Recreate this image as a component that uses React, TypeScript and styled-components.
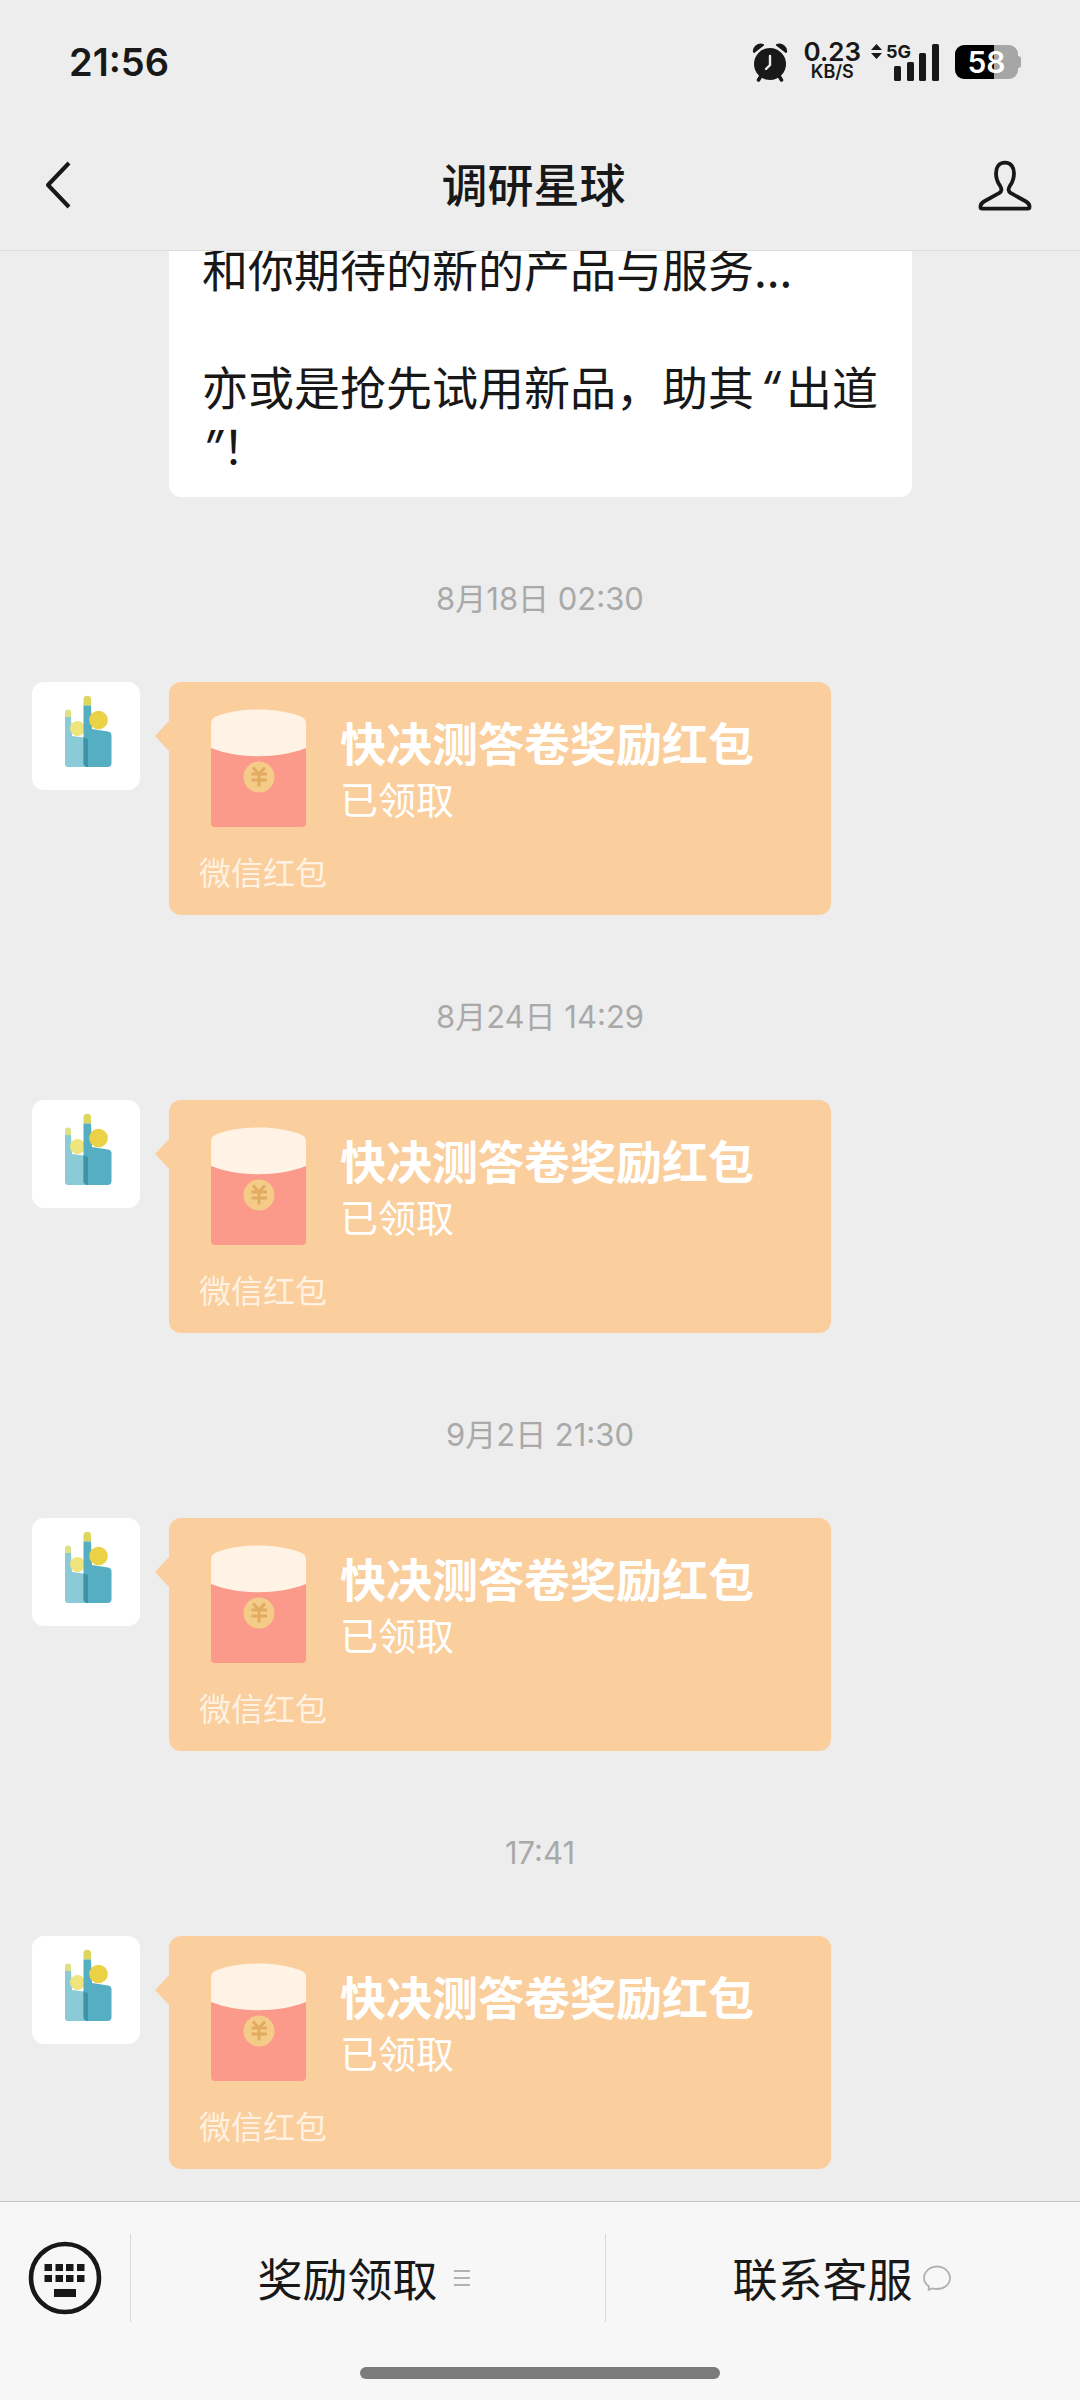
import React from "react";
import styled, { createGlobalStyle, css } from "styled-components";

const ink = "#181818";
const cjk = '"Noto Sans CJK SC", "Noto Sans", sans-serif';
const latin = 'Inter, "Noto Sans CJK SC", sans-serif';

const GlobalStyle = createGlobalStyle`
  *, *::before, *::after { box-sizing: border-box; }
  body { margin: 0; background: #ededed; color: ${ink}; font-family: ${cjk}; }
  button { margin: 0; padding: 0; border: 0; background: none; color: inherit; font: inherit; }
  svg { display: block; flex: none; }
`;

const Page = styled.div`
  display: flex;
  flex-direction: column;
  height: 100vh;
  background: #ededed;
`;

const StatusBar = styled.div`
  display: flex;
  align-items: center;
  justify-content: space-between;
  flex: none;
  height: 124px;
  padding: 0 59px 0 69px;
  font-family: ${latin};
`;

const Clock = styled.time`
  font-size: 38px;
  font-weight: 600;
  line-height: 48px;
`;

const StatusIcons = styled.div`
  display: flex;
  align-items: center;
  gap: 16px;
`;

const NetSpeed = styled.div`
  display: flex;
  flex-direction: column;
  align-items: center;
  margin-right: -6px;
  font-weight: 600;
`;

const SpeedValue = styled.span`
  font-size: 26px;
  line-height: 20px;
`;

const SpeedUnit = styled.span`
  font-size: 18px;
  line-height: 20px;
`;

const Signal = styled.div`
  display: flex;
  align-items: flex-end;
`;

const Network = styled.span`
  align-self: flex-start;
  margin: 0 -17px 0 4px;
  font-size: 18px;
  font-weight: 700;
  line-height: 16px;
`;

const Battery = styled.div`
  display: flex;
  align-items: center;
`;

const BatteryBody = styled.div<{ $level: number }>`
  width: 63px;
  height: 34px;
  border-radius: 9px;
  background: linear-gradient(90deg, #000 ${(p) => p.$level}%, #a6a6a6 ${(p) => p.$level}%);
  color: #fff;
  font-size: 30px;
  font-weight: 600;
  line-height: 34px;
  text-align: center;
`;

const BatteryNub = styled.div`
  width: 3px;
  height: 12px;
  border-radius: 0 4px 4px 0;
  background: #a6a6a6;
`;

const Header = styled.header`
  display: flex;
  align-items: center;
  justify-content: space-between;
  flex: none;
  height: 127px;
  padding: 0 47px 4px 42px;
  border-bottom: 1px solid #dcdcdc;
`;

const Title = styled.h1`
  margin: 0;
  padding-bottom: 6px;
  font-size: 46px;
  font-weight: 500;
  line-height: 64px;
`;

const IconButton = styled.button`
  display: flex;
  align-items: center;
  justify-content: center;
`;

const BackButton = styled(IconButton)`
  justify-content: flex-start;
  width: 48px;
`;

const Chat = styled.main`
  display: flex;
  flex: 1;
  flex-direction: column;
  justify-content: flex-end;
  min-height: 0;
  overflow: hidden;
  padding: 0 32px;
`;

const Bubble = styled.div`
  flex: none;
  margin: 0 136px 78px 137px;
  padding: 23px 33px;
  border-radius: 12px;
  background: #fff;
  font-size: 46px;
  line-height: 59px;
`;

const Line = styled.p`
  min-height: 59px;
  margin: 0;
  white-space: nowrap;
`;

const Quote = styled.span<{ $closing?: boolean }>`
  display: inline-block;
  width: ${(p) => (p.$closing ? 20 : 32)}px;
  font-family: Inter, sans-serif;
  font-style: italic;
  line-height: 1;
  text-align: ${(p) => (p.$closing ? "left" : "center")};
`;

const Stamp = styled.time`
  flex: none;
  margin-bottom: 60px;
  color: #a9a9a9;
  font-family: ${latin};
  font-size: 31px;
  line-height: 47px;
  text-align: center;
`;

const MessageRow = styled.div<{ $last: boolean }>`
  display: flex;
  align-items: flex-start;
  flex: none;
  gap: 29px;
  margin-bottom: ${(p) => (p.$last ? 32 : 78)}px;
`;

const AvatarBox = styled.div`
  flex: none;
  width: 108px;
  height: 108px;
  border-radius: 12px;
  background: #fff;
`;

const Packet = styled.button`
  position: relative;
  display: flex;
  flex-direction: column;
  justify-content: space-between;
  width: 662px;
  height: 233px;
  padding: 27px 30px 24px;
  border-radius: 12px;
  background: #fbce9d;
  color: #fff;
  text-align: left;

  &::before {
    content: "";
    position: absolute;
    top: 39px;
    left: -14px;
    border: 15px solid transparent;
    border-left-width: 0;
    border-right: 14px solid #fbce9d;
  }
`;

const PacketBody = styled.span`
  display: flex;
  align-items: flex-start;
  gap: 34px;
  padding-left: 12px;
`;

const PacketText = styled.span`
  display: flex;
  flex-direction: column;
  padding-top: 4px;
`;

const PacketTitle = styled.strong`
  font-size: 46px;
  font-weight: 700;
  line-height: 56px;
`;

const PacketState = styled.span`
  font-size: 38px;
  line-height: 58px;
`;

const PacketSource = styled.span`
  color: #fff2e2;
  font-size: 32px;
  line-height: 40px;
`;

const Footer = styled.footer`
  flex: none;
  border-top: 1px solid #c6c6c6;
  background: #f7f7f7;
`;

const Menu = styled.nav`
  display: flex;
  align-items: center;
  height: 152px;
`;

const footerRule = css`
  border-left: 1px solid #dadada;
`;

const KeyboardButton = styled(IconButton)`
  width: 130px;
`;

const MenuButton = styled.button`
  display: flex;
  flex: 1;
  align-items: center;
  justify-content: center;
  gap: 10px;
  height: 88px;
  padding-right: 3px;
  ${footerRule}
  font-size: 45px;
  line-height: 64px;
`;

const HomeBar = styled.div`
  width: 360px;
  height: 12px;
  margin: 13px auto 21px;
  border-radius: 6px;
  background: #7b7b7b;
`;

const AlarmIcon = () => (
  <svg width="36" height="39" viewBox="0 0 36 39" aria-hidden="true">
    <path d="M2 9C1 5 6 0 11 2Z" fill={ink} stroke={ink} strokeWidth="2" strokeLinejoin="round" />
    <path d="M34 9C35 5 30 0 25 2Z" fill={ink} stroke={ink} strokeWidth="2" strokeLinejoin="round" />
    <circle cx="18" cy="21" r="16" fill={ink} />
    <path d="M9 33 6.500 37M27 33l2.500 4" stroke={ink} strokeWidth="3.500" strokeLinecap="round" />
    <path d="M18 13v9l-4 4" fill="none" stroke="#ededed" strokeWidth="2.400" strokeLinecap="round" />
  </svg>
);

const DataArrows = () => (
  <svg width="11" height="37" viewBox="0 0 11 37" aria-hidden="true">
    <path d="M5.500 0 11 6H0ZM5.500 15 0 9h11Z" fill={ink} />
  </svg>
);

const SignalBars = () => (
  <svg width="45" height="37" viewBox="0 0 45 37" fill={ink} aria-hidden="true">
    <rect x="0" y="22" width="7" height="15" rx="1.500" />
    <rect x="13" y="18" width="7" height="19" rx="1.500" />
    <rect x="25" y="9" width="7" height="28" rx="1.500" />
    <rect x="38" y="0" width="7" height="37" rx="1.500" />
  </svg>
);

const BackIcon = () => (
  <svg width="30" height="48" viewBox="0 0 30 48" fill="none" stroke={ink} strokeWidth="4" aria-hidden="true">
    <path d="M27 2 6 24l21 22" strokeLinejoin="round" />
  </svg>
);

const ProfileIcon = () => (
  <svg width="56" height="52" viewBox="0 0 56 52" fill="none" stroke={ink} strokeWidth="3.800" strokeLinejoin="round" aria-hidden="true">
    <path d="M28 3.700c-6 0-9 4.500-9 10.500 0 6 1.500 9 4 12.500 2 3 2 6-1 7.500L7 42.500c-2.500 1.500-3.700 3-3.500 5.500q0 1.700 1.700 1.700h45.600q1.700 0 1.700-1.700c.2-2.500-1-4-3.500-5.500L34 34.200c-3-1.500-3-4.500-1-7.500 2.500-3.500 4-6.500 4-12.500 0-6-3-10.500-9-10.500Z" />
  </svg>
);

const AvatarIcon = () => (
  <svg width="108" height="108" viewBox="0 0 108 108" aria-hidden="true">
    <path d="M33 35v-4.500a3 3 0 0 1 6 0V35Z" fill="#dfdf83" />
    <path d="M33 35h6l1 19 16 2v29H36a3 3 0 0 1-3-3Z" fill="#8bcbd7" />
    <circle cx="45.500" cy="46.500" r="7.500" fill="#f0e47c" />
    <path d="M51.500 23.500V17.500a3.700 3.700 0 0 1 7.500 0v6Z" fill="#dcd75b" />
    <path d="M51.500 23.500H59L60 47l16 2.500a4 4 0 0 1 3.500 4V81a4 4 0 0 1-4 4h-20a4 4 0 0 1-4-4Z" fill="#55aec1" />
    <path d="M51.500 55.500 56 57v28a4 4 0 0 1-4.500-4Z" fill="#3c94aa" />
    <circle cx="66.500" cy="38" r="9.300" fill="#ead145" />
  </svg>
);

const EnvelopeIcon = () => (
  <svg width="95" height="118" viewBox="0 0 95 118" aria-hidden="true">
    <path d="M0 30h95v84a4 4 0 0 1-4 4H4a4 4 0 0 1-4-4Z" fill="#fb998a" />
    <path d="M0 39V15Q0 10 4 8C28-2 67-2 91 8q4 2 4 7V39C68 50 27 50 0 39Z" fill="#fff3e6" />
    <circle cx="48" cy="68" r="15.500" fill="#f5cb88" />
    <path d="m42 58.500 6 6.500 6-6.500M40.500 65h15.500M40.500 71h15.500M48 65v12.500" fill="none" stroke="#e2ab62" strokeWidth="3" />
  </svg>
);

const KeyboardIcon = () => (
  <svg width="74" height="74" viewBox="0 0 74 74" fill={ink} aria-hidden="true">
    <circle cx="37" cy="37" r="34" fill="none" stroke={ink} strokeWidth="4.600" />
    {[16.5, 27.5, 38, 49].map((x) => (
      <React.Fragment key={x}>
        <rect x={x} y="23" width="7.500" height="7" />
        <rect x={x} y="34" width="7.500" height="7" />
      </React.Fragment>
    ))}
    <rect x="26" y="48" width="22" height="8" />
  </svg>
);

const ListIcon = () => (
  <svg width="28" height="28" viewBox="0 0 28 28" fill="none" stroke="#b2b2b2" strokeWidth="2" aria-hidden="true">
    <path d="M6 7h16M6 14h16M6 21h16" />
  </svg>
);

const ServiceIcon = () => (
  <svg width="28" height="28" viewBox="0 0 28 28" fill="none" stroke="#b2b2b2" strokeWidth="1.800" strokeLinejoin="round" aria-hidden="true">
    <path d="M6 22.500C3 20.500 1 17.500 1 14 1 7.500 7 2.500 14 2.500s13 5 13 11.500S21 25 14 25c-1.500 0-3-.200-4.500-.700L5.500 26Z" />
  </svg>
);

const stamps = ["8月18日 02:30", "8月24日 14:29", "9月2日 21:30", "17:41"];

const RedPacket = ({ last }: { last: boolean }) => (
  <MessageRow $last={last}>
    <AvatarBox>
      <AvatarIcon />
    </AvatarBox>
    <Packet type="button">
      <PacketBody>
        <EnvelopeIcon />
        <PacketText>
          <PacketTitle>快决测答卷奖励红包</PacketTitle>
          <PacketState>已领取</PacketState>
        </PacketText>
      </PacketBody>
      <PacketSource>微信红包</PacketSource>
    </Packet>
  </MessageRow>
);

export default function App() {
  return (
    <Page>
      <GlobalStyle />
      <StatusBar>
        <Clock>21:56</Clock>
        <StatusIcons>
          <AlarmIcon />
          <NetSpeed>
            <SpeedValue>0.23</SpeedValue>
            <SpeedUnit>KB/S</SpeedUnit>
          </NetSpeed>
          <Signal>
            <DataArrows />
            <Network>5G</Network>
            <SignalBars />
          </Signal>
          <Battery>
            <BatteryBody $level={62}>58</BatteryBody>
            <BatteryNub />
          </Battery>
        </StatusIcons>
      </StatusBar>
      <Header>
        <BackButton type="button" aria-label="返回">
          <BackIcon />
        </BackButton>
        <Title>调研星球</Title>
        <IconButton type="button" aria-label="公众号资料">
          <ProfileIcon />
        </IconButton>
      </Header>
      <Chat>
        <Bubble>
          <Line>和你期待的新的产品与服务...</Line>
          <Line />
          <Line>
            亦或是抢先试用新品，助其<Quote>“</Quote>出道
          </Line>
          <Line>
            <Quote $closing>”</Quote>！
          </Line>
        </Bubble>
        {stamps.map((stamp, i) => (
          <React.Fragment key={stamp}>
            <Stamp>{stamp}</Stamp>
            <RedPacket last={i === stamps.length - 1} />
          </React.Fragment>
        ))}
      </Chat>
      <Footer>
        <Menu>
          <KeyboardButton type="button" aria-label="切换到键盘">
            <KeyboardIcon />
          </KeyboardButton>
          <MenuButton type="button">
            奖励领取
            <ListIcon />
          </MenuButton>
          <MenuButton type="button">
            联系客服
            <ServiceIcon />
          </MenuButton>
        </Menu>
        <HomeBar />
      </Footer>
    </Page>
  );
}
